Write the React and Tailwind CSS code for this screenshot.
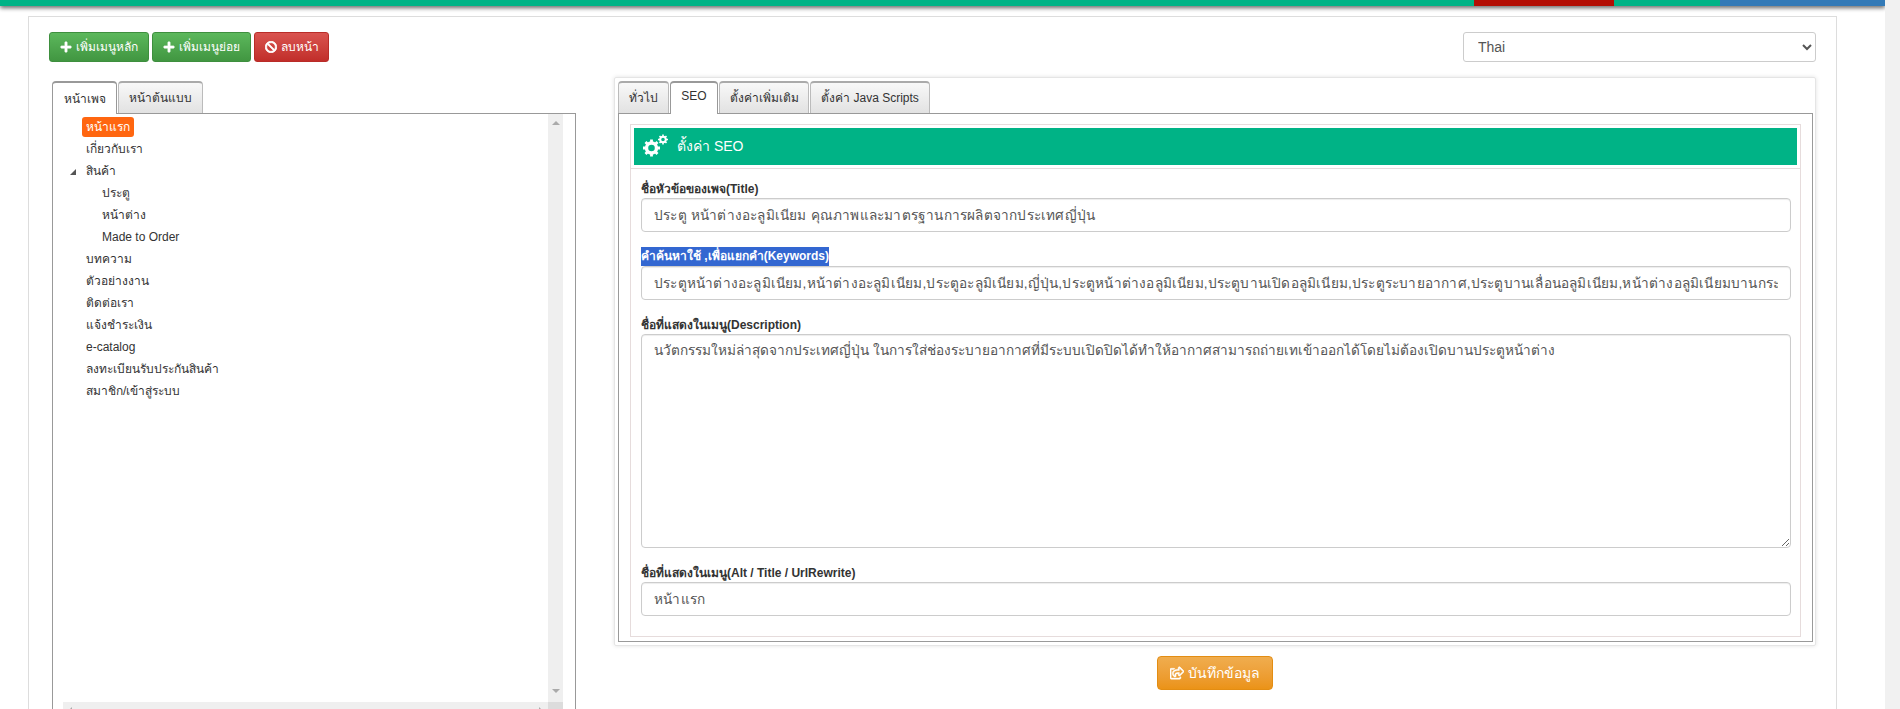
import { FaPlus, FaBan, FaRegShareSquare } from 'react-icons/fa'

const menu = [
  { name: 'หน้าแรก', active: true },
  { name: 'เกี่ยวกับเรา' },
  { name: 'สินค้า', open: true },
  { name: 'ประตู', child: true },
  { name: 'หน้าต่าง', child: true },
  { name: 'Made to Order', child: true },
  { name: 'บทความ' },
  { name: 'ตัวอย่างงาน' },
  { name: 'ติดต่อเรา' },
  { name: 'แจ้งชำระเงิน' },
  { name: 'e-catalog' },
  { name: 'ลงทะเบียนรับประกันสินค้า' },
  { name: 'สมาชิก/เข้าสู่ระบบ' },
]

const inputClass = 'block w-full h-[34px] px-3 border border-[#ccc] rounded text-[13.6px] tracking-[0.2px] text-[#555] bg-white outline-none shadow-[inset_0_1px_1px_rgba(0,0,0,0.075)]'
const labelClass = 'block text-xs font-bold text-[#333] leading-[17px]'
const tabOff = 'h-[32px] flex items-center whitespace-nowrap text-xs text-[#333] border border-b-0 border-[#bbb] border-t-2 border-t-[#aaa] rounded-t bg-gradient-to-b from-[#f8f8f8] to-[#e2e2e2]'
const tabOn = 'h-[33px] -mb-px flex items-center whitespace-nowrap text-xs text-[#333] border border-b-0 border-[#999] border-t-2 border-t-[#999] rounded-t bg-white z-10'

function Gears() {
  return (
    <svg width="26" height="24" viewBox="0 0 26 24" fill="none" stroke="white">
      <circle cx="8.5" cy="14" r="5" strokeWidth="3.4" />
      <path d="M8.5 5.5v3.5M8.5 19v3.5M0 14h3.5M13.5 14H17M2.5 8l2.5 2.5M12 17.5l2.5 2.5M2.5 20L5 17.5M12 10.5L14.5 8" strokeWidth="2.8" />
      <circle cx="20" cy="5.5" r="2.8" strokeWidth="2" />
      <path d="M20 .5v2M20 8.5v2M15 5.5h2M23 5.5h2M16.5 2l1.300 1.300M22.200 7.700L23.500 9M16.500 9l1.300-1.300M22.200 3.300L23.500 2" strokeWidth="1.600" />
    </svg>
  )
}

function Tree() {
  return (
    <ul className="pt-[2px] pl-[17px] text-xs text-[#333]">
      {menu.map((m) => (
        <li key={m.name} className={`h-[22px] flex items-center relative ${m.child ? 'pl-[32px]' : 'pl-[16px]'}`}>
          {m.open && (
            <span className="absolute left-0 top-[9px] w-0 h-0 border-l-[6px] border-l-transparent border-b-[6px] border-b-[#555]" />
          )}
          {m.active ? (
            <span className="-ml-1 px-1 h-[20px] leading-[20px] rounded-[3px] bg-[#ff6610] text-white">{m.name}</span>
          ) : (
            <span>{m.name}</span>
          )}
        </li>
      ))}
    </ul>
  )
}

export default function App() {
  return (
    <div className="flex h-[709px] overflow-hidden bg-white font-['Liberation_Sans',sans-serif]">
      <div className="flex-1 min-w-0">
        {/* แถบสีด้านบน */}
        <div className="flex h-[6px] bg-[#00b386] shadow-[0_2px_4px_rgba(0,0,0,0.6)]">
          <div className="w-[1474px]" />
          <div className="w-[140px] bg-[#b30f05]" />
          <div className="w-[106px]" />
          <div className="flex-1 bg-[#337ab7]" />
        </div>

        <div className="ml-[28px] w-[1809px] mt-[10px] h-[800px] border border-b-0 border-[#ddd] px-[20px] pt-[15px]">
          <div className="flex justify-between">
            <div className="flex gap-[3px] text-xs text-white">
              <button className="w-[100px] h-[30px] flex items-center justify-center gap-1 rounded-[3px] border border-[#3e8f3e] bg-gradient-to-b from-[#5cb85c] to-[#419641]">
                <FaPlus className="w-[12px] h-[12px]" stroke="currentColor" strokeWidth={25} />เพิ่มเมนูหลัก
              </button>
              <button className="w-[99px] h-[30px] flex items-center justify-center gap-1 rounded-[3px] border border-[#3e8f3e] bg-gradient-to-b from-[#5cb85c] to-[#419641]">
                <FaPlus className="w-[12px] h-[12px]" stroke="currentColor" strokeWidth={25} />เพิ่มเมนูย่อย
              </button>
              <button className="w-[75px] h-[30px] flex items-center justify-center gap-1 rounded-[3px] border border-[#b92c28] bg-gradient-to-b from-[#d9534f] to-[#c12e2a]">
                <FaBan className="w-[12px] h-[12px]" stroke="currentColor" strokeWidth={30} />ลบหน้า
              </button>
            </div>
            <select className="w-[353px] h-[30px] pl-[10px] text-sm text-[#555] bg-white border border-[#ccc] rounded-[3px]">
              <option>Thai</option>
            </select>
          </div>

          <div className="flex justify-between mt-[15px]">
            {/* เมนูซ้าย */}
            <div className="w-[524px] ml-[3px] pt-[4px]">
              <div className="flex gap-px relative">
                <div className={`${tabOn} w-[65px] justify-center`}>หน้าเพจ</div>
                <div className={`${tabOff} w-[85px] justify-center`}>หน้าต้นแบบ</div>
              </div>
              <div className="h-[600px] border border-[#999] flex pr-[12px]">
                <div className="flex-1 relative">
                  <Tree />
                  <div className="absolute left-[10px] right-0 top-[588px] h-[20px] bg-[#efefef]">
                    <span className="absolute left-[5px] top-[5px] w-0 h-0 border-y-[4px] border-y-transparent border-r-[4px] border-r-[#aaa]" />
                    <span className="absolute right-[5px] top-[5px] w-0 h-0 border-y-[4px] border-y-transparent border-l-[4px] border-l-[#aaa]" />
                  </div>
                </div>
                <div className="w-[15px] bg-[#efefef] relative">
                  <span className="absolute left-[4px] top-[7px] w-0 h-0 border-x-[4px] border-x-transparent border-b-[4px] border-b-[#aaa]" />
                  <span className="absolute left-[4px] top-[575px] w-0 h-0 border-x-[4px] border-x-transparent border-t-[4px] border-t-[#aaa]" />
                  <div className="absolute left-0 right-0 top-[588px] h-[20px] bg-[#dcdcdc]" />
                </div>
              </div>
            </div>

            {/* ฟอร์มขวา */}
            <div className="w-[1202px]">
              <div className="border border-[#e5e5e5] shadow-[0_0_4px_rgba(0,0,0,0.12)] rounded-[2px] pt-[3px] pl-[3px] pr-[2px] pb-[3px]">
                <div className="flex gap-px relative">
                  <div className={`${tabOff} w-[51px] justify-center`}>ทั่วไป</div>
                  <div className={`${tabOn} w-[48px] justify-center pb-[6px]`}>SEO</div>
                  <div className={`${tabOff} w-[90px] justify-center`}>ตั้งค่าเพิ่มเติม</div>
                  <div className={`${tabOff} w-[120px] justify-center`}>ตั้งค่า Java Scripts</div>
                </div>
                <div className="border border-[#999] pt-[10px] px-[11px] pb-[4px]">
                  <div className="border border-[#e6dcdc] p-[3px] pb-0">
                    <div className="h-[37px] bg-[#00b386] text-white text-sm flex items-center pl-[9px] pb-[2px] gap-[8px]">
                      <Gears />
                      <span>ตั้งค่า SEO</span>
                    </div>
                    <div className="border-t border-[#e6dcdc] mt-[3px] -mx-[3px] pl-[10px] pr-[9px] pt-[12px] pb-[20px]">
                      <label className={labelClass}>ชื่อหัวข้อของเพจ(Title)</label>
                      <input readOnly className={inputClass} value="ประตู หน้าต่างอะลูมิเนียม คุณภาพและมาตรฐานการผลิตจากประเทศญี่ปุ่น" />
                      <label className={`${labelClass} mt-[15px]`}>
                        <span className="inline-block bg-[#3367d1] text-white h-[19px] leading-[19px]">คำค้นหาใช้ ,เพื่อแยกคำ(Keywords)</span>
                      </label>
                      <input readOnly className={inputClass} value="ประตูหน้าต่างอะลูมิเนียม,หน้าต่างอะลูมิเนียม,ประตูอะลูมิเนียม,ญี่ปุ่น,ประตูหน้าต่างอลูมิเนียม,ประตูบานเปิดอลูมิเนียม,ประตูระบายอากาศ,ประตูบานเลื่อนอลูมิเนียม,หน้าต่างอลูมิเนียมบานกระทุ้ง" />
                      <label className={`${labelClass} mt-[17px]`}>ชื่อที่แสดงในเมนู(Description)</label>
                      <textarea readOnly className="block w-full h-[214px] px-3 py-[6px] border border-[#ccc] rounded text-[13.6px] text-[#555] outline-none shadow-[inset_0_1px_1px_rgba(0,0,0,0.075)]" value="นวัตกรรมใหม่ล่าสุดจากประเทศญี่ปุ่น ในการใส่ช่องระบายอากาศที่มีระบบเปิดปิดได้ทำให้อากาศสามารถถ่ายเทเข้าออกได้โดยไม่ต้องเปิดบานประตูหน้าต่าง" />
                      <label className={`${labelClass} mt-[17px]`}>ชื่อที่แสดงในเมนู(Alt / Title / UrlRewrite)</label>
                      <input readOnly className={inputClass} value="หน้าแรก" />
                    </div>
                  </div>
                </div>
              </div>
              <div className="flex justify-center mt-[10px]">
                <button className="w-[116px] h-[34px] flex items-center justify-center gap-1 text-sm text-white rounded border border-[#e38d13] bg-gradient-to-b from-[#f0ad4e] to-[#eb9316]">
                  <FaRegShareSquare className="w-[14px] h-[14px]" stroke="currentColor" strokeWidth={20} />บันทึกข้อมูล
                </button>
              </div>
            </div>
          </div>
        </div>
      </div>
      <div className="w-[15px] bg-[#f1f1f1]" />
    </div>
  )
}
